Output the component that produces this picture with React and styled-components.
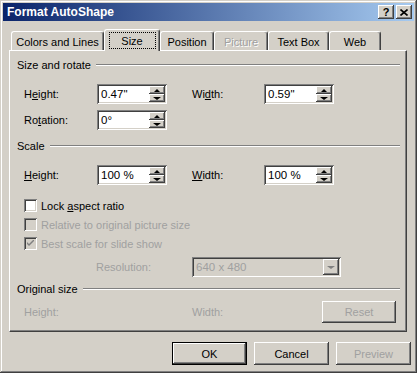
import React from "react";
import styled, { createGlobalStyle } from "styled-components";

const Global = createGlobalStyle`
  html, body { margin: 0; padding: 0; background: #d4d0c8; }
  * { box-sizing: border-box; }
`;

const raised = `
  box-shadow: inset -1px -1px #404040, inset 1px 1px #ffffff,
    inset -2px -2px #808080, inset 2px 2px #d4d0c8;
`;
const sunken = `
  box-shadow: inset 1px 1px #808080, inset -1px -1px #ffffff,
    inset 2px 2px #404040, inset -2px -2px #d4d0c8;
`;

export default function App() {
  return (
    <>
      <Global />
      <Win>
        <TitleBar>
          <Title>Format AutoShape</Title>
          <CaptionBtn>?</CaptionBtn>
          <CaptionBtn>
            <svg width="8" height="7" viewBox="0 0 8 7">
              <path d="M0.5 0.5 L7.5 6.5 M7.5 0.5 L0.5 6.5" stroke="#000" strokeWidth="1.6" />
            </svg>
          </CaptionBtn>
        </TitleBar>
        <Body>
          <TabRow>
            <Tab $w={93}>Colors and Lines</Tab>
            <Tab $w={56} $active>
              <Focus>Size</Focus>
            </Tab>
            <Tab $w={54}>Position</Tab>
            <Tab $w={54} $disabled>Picture</Tab>
            <Tab $w={61}>Text Box</Tab>
            <Tab $w={52}>Web</Tab>
          </TabRow>
          <Panel>
            <Section $mt={7}>
              <span>Size and rotate</span>
              <Rule />
            </Section>
            <FieldRow $mt={12}>
              <Label $w={73}>H<u>e</u>ight:</Label>
              <Spin value={'0.47"'} />
              <Label $w={72} $ml={25}>Wi<u>d</u>th:</Label>
              <Spin value={'0.59"'} />
            </FieldRow>
            <FieldRow $mt={6}>
              <Label $w={73}>Ro<u>t</u>ation:</Label>
              <Spin value="0°" />
            </FieldRow>
            <Section $mt={9}>
              <span>Scale</span>
              <Rule />
            </Section>
            <FieldRow $mt={12}>
              <Label $w={73}><u>H</u>eight:</Label>
              <Spin value="100 %" />
              <Label $w={72} $ml={25}><u>W</u>idth:</Label>
              <Spin value="100 %" />
            </FieldRow>
            <CheckRow $mt={14}>
              <Box />
              <span>Lock <u>a</u>spect ratio</span>
            </CheckRow>
            <CheckRow $mt={6} $disabled>
              <Box $disabled />
              <span>Relative to original picture size</span>
            </CheckRow>
            <CheckRow $mt={6} $disabled>
              <Box $disabled>
                <svg width="7" height="7" viewBox="0 0 7 7">
                  <path d="M0 2 L0 4 L2 6 L7 1 L7 -1 L2 4 Z" fill="#808080" />
                </svg>
              </Box>
              <span>Best scale for slide show</span>
            </CheckRow>
            <ResRow>
              <Label $w={96} $disabled>Resolution:</Label>
              <Combo>
                <ComboText>640 x 480</ComboText>
                <ComboBtn>
                  <Arrow $down $color="#808080" />
                </ComboBtn>
              </Combo>
            </ResRow>
            <Section $mt={5}>
              <span>Original size</span>
              <Rule />
            </Section>
            <OrigRow>
              <Label $w={168} $disabled>Height:</Label>
              <Label $w={130} $disabled>Width:</Label>
              <Button $w={74} $h={22} $disabled>Reset</Button>
            </OrigRow>
          </Panel>
          <ButtonRow>
            <Button $default>OK</Button>
            <Button>Cancel</Button>
            <Button $disabled>Preview</Button>
          </ButtonRow>
        </Body>
      </Win>
    </>
  );
}

function Spin({ value }) {
  return (
    <SpinBox>
      <SpinText>{value}</SpinText>
      <SpinCol>
        <SpinBtn>
          <Arrow />
        </SpinBtn>
        <SpinBtn>
          <Arrow $down />
        </SpinBtn>
      </SpinCol>
    </SpinBox>
  );
}

const Win = styled.div`
  width: 417px;
  height: 373px;
  padding: 3px;
  background: #d4d0c8;
  box-shadow: inset -1px -1px #404040, inset 1px 1px #d4d0c8,
    inset -2px -2px #808080, inset 2px 2px #ffffff;
  display: flex;
  flex-direction: column;
  font: 11px "Liberation Sans", Arial, sans-serif;
  color: #000;
`;

const TitleBar = styled.div`
  height: 18px;
  display: flex;
  align-items: center;
  gap: 2px;
  padding: 0 2px;
  background: linear-gradient(to right, #0a246a, #a6caf0);
`;

const Title = styled.div`
  flex: 1;
  padding-left: 2px;
  color: #fff;
  font-weight: bold;
  font-size: 12px;
`;

const CaptionBtn = styled.div`
  width: 16px;
  height: 14px;
  background: #d4d0c8;
  ${raised}
  display: flex;
  align-items: center;
  justify-content: center;
  font-weight: bold;
  font-size: 11px;
  line-height: 14px;
`;

const Body = styled.div`
  flex: 1;
  display: flex;
  flex-direction: column;
  padding: 8px 7px 0 6px;
`;

const TabRow = styled.div`
  display: flex;
  align-items: flex-end;
  height: 21px;
  padding-left: 2px;
  position: relative;
  z-index: 1;
`;

const Tab = styled.div`
  width: ${(p) => p.$w}px;
  height: ${(p) => (p.$active ? 22 : 19)}px;
  margin-bottom: ${(p) => (p.$active ? -1 : 0)}px;
  padding-top: ${(p) => (p.$active ? 2 : 3)}px;
  background: #d4d0c8;
  border-top: 1px solid #fff;
  border-left: 1px solid #fff;
  border-right: 1px solid #404040;
  border-radius: 3px 3px 0 0;
  box-shadow: inset -1px 0 #808080;
  display: flex;
  justify-content: center;
  align-items: flex-start;
  line-height: 14px;
  color: ${(p) => (p.$disabled ? "#a0a0a0" : "#000")};
  text-shadow: ${(p) => (p.$disabled ? "1px 1px #fff" : "none")};
  white-space: nowrap;
`;

const Focus = styled.div`
  width: 47px;
  height: 17px;
  border: 1px dotted #000;
  display: flex;
  align-items: center;
  justify-content: center;
`;

const Panel = styled.div`
  height: 282px;
  border-top: 1px solid #fff;
  border-left: 1px solid #fff;
  border-right: 1px solid #404040;
  border-bottom: 1px solid #404040;
  box-shadow: inset -1px -1px #808080;
  padding: 0 6px 0 7px;
  display: flex;
  flex-direction: column;
`;

const Section = styled.div`
  margin-top: ${(p) => p.$mt}px;
  height: 14px;
  display: flex;
  align-items: center;
  gap: 5px;
  white-space: nowrap;
`;

const Rule = styled.div`
  flex: 1;
  border-top: 1px solid #808080;
  border-bottom: 1px solid #fff;
`;

const FieldRow = styled.div`
  margin-top: ${(p) => p.$mt}px;
  height: 20px;
  display: flex;
  align-items: center;
  padding-left: 7px;
`;

const Label = styled.div`
  width: ${(p) => p.$w}px;
  margin-left: ${(p) => p.$ml || 0}px;
  flex-shrink: 0;
  color: ${(p) => (p.$disabled ? "#a0a0a0" : "#000")};
  white-space: nowrap;
`;

const SpinBox = styled.div`
  width: 70px;
  height: 20px;
  padding: 2px;
  background: #fff;
  ${sunken}
  display: flex;
`;

const SpinText = styled.div`
  flex: 1;
  padding-left: 2px;
  font-size: 11.5px;
  line-height: 16px;
`;

const SpinCol = styled.div`
  width: 16px;
  display: flex;
  flex-direction: column;
`;

const SpinBtn = styled.div`
  height: 8px;
  background: #d4d0c8;
  ${raised}
  display: flex;
  align-items: center;
  justify-content: center;
`;

const Arrow = styled.div`
  width: 0;
  height: 0;
  border-left: ${(p) => (p.$down ? 4 : 3)}px solid transparent;
  border-right: ${(p) => (p.$down ? 4 : 3)}px solid transparent;
  ${(p) =>
    p.$down
      ? `border-top: 3px solid ${p.$color || "#000"};`
      : `border-bottom: 3px solid ${p.$color || "#000"};`}
`;

const CheckRow = styled.div`
  margin-top: ${(p) => p.$mt}px;
  height: 13px;
  display: flex;
  align-items: center;
  gap: 4px;
  padding-left: 7px;
  color: ${(p) => (p.$disabled ? "#a0a0a0" : "#000")};
  white-space: nowrap;
`;

const Box = styled.div`
  width: 13px;
  height: 13px;
  flex-shrink: 0;
  background: ${(p) => (p.$disabled ? "#d4d0c8" : "#fff")};
  ${sunken}
  display: flex;
  align-items: center;
  justify-content: center;
`;

const ResRow = styled.div`
  margin-top: 7px;
  height: 20px;
  display: flex;
  align-items: center;
  padding-left: 79px;
`;

const Combo = styled.div`
  width: 149px;
  height: 20px;
  padding: 2px;
  background: #d4d0c8;
  ${sunken}
  display: flex;
`;

const ComboText = styled.div`
  flex: 1;
  padding-left: 2px;
  font-size: 11.5px;
  line-height: 16px;
  color: #a0a0a0;
`;

const ComboBtn = styled.div`
  width: 16px;
  height: 16px;
  background: #d4d0c8;
  ${raised}
  display: flex;
  align-items: center;
  justify-content: center;
`;

const OrigRow = styled.div`
  margin-top: 5px;
  height: 22px;
  display: flex;
  align-items: center;
  padding-left: 7px;
`;

const Button = styled.div`
  width: ${(p) => p.$w || 75}px;
  height: ${(p) => p.$h || 23}px;
  flex-shrink: 0;
  background: #d4d0c8;
  box-shadow: ${(p) =>
    p.$default
      ? "inset 0 0 0 1px #000, inset -2px -2px #404040, inset 2px 2px #fff, inset -3px -3px #808080"
      : "inset -1px -1px #404040, inset 1px 1px #fff, inset -2px -2px #808080"};
  display: flex;
  align-items: center;
  justify-content: center;
  color: ${(p) => (p.$disabled ? "#a0a0a0" : "#000")};
`;

const ButtonRow = styled.div`
  margin-top: 10px;
  margin-right: -4px;
  display: flex;
  justify-content: flex-end;
  gap: 7px;
`;
